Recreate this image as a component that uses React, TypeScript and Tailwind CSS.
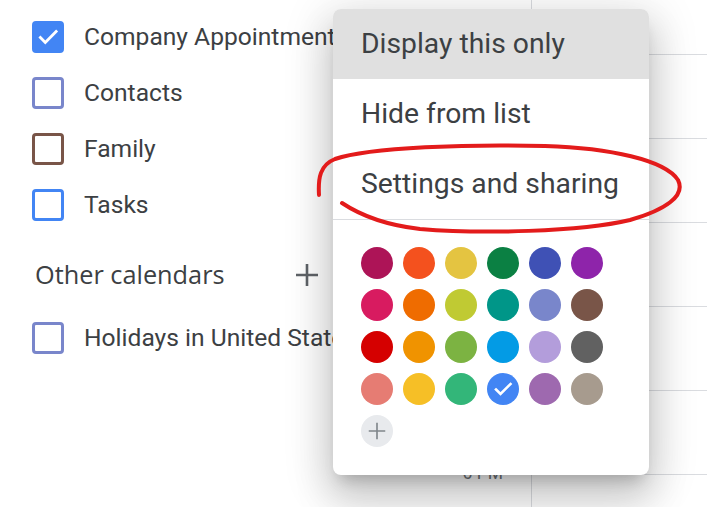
import React from "react";

const calendars = [
  { name: "Company Appointments", color: "#4285f4", checked: true },
  { name: "Contacts", color: "#7986cb", checked: false },
  { name: "Family", color: "#795548", checked: false },
  { name: "Tasks", color: "#4285f4", checked: false },
];

const swatches = [
  "#ad1457", "#f4511e", "#e4c441", "#0b8043", "#3f51b5", "#8e24aa",
  "#d81b60", "#ef6c00", "#c0ca33", "#009688", "#7986cb", "#795548",
  "#d50000", "#f09300", "#7cb342", "#039be5", "#b39ddb", "#616161",
  "#e67c73", "#f6bf26", "#33b679", "#4285f4", "#9e69af", "#a79b8e",
];

const Check = ({ size }: { size: number }) => (
  <svg width={size} height={size} viewBox="0 0 24 24" fill="none">
    <path
      d="M5 12.5l4.5 4.5L19.5 7"
      stroke="white"
      strokeWidth="2.6"
      strokeLinecap="square"
    />
  </svg>
);

const Plus = ({ size, stroke, color }: { size: number; stroke: number; color: string }) => (
  <svg width={size} height={size} viewBox="0 0 24 24" fill="none">
    <path d="M12 1v22M1 12h22" stroke={color} strokeWidth={stroke} />
  </svg>
);

const CalendarRow = ({
  name,
  color,
  checked,
}: {
  name: string;
  color: string;
  checked: boolean;
}) => (
  <div className="flex h-[56px] items-center gap-[20px] pl-[32px]">
    <div
      className="flex h-[32px] w-[32px] shrink-0 items-center justify-center rounded-[4px] border-[3px]"
      style={{ borderColor: color, backgroundColor: checked ? color : "white" }}
    >
      {checked && <Check size={28} />}
    </div>
    <span className="text-[24.6px] leading-none text-[#3c4043]">{name}</span>
  </div>
);

export default function App() {
  return (
    <div className="relative flex h-[507px] w-[707px] overflow-hidden bg-white font-['Roboto',sans-serif]">
      {/* sidebar */}
      <div className="w-[440px] shrink-0 overflow-hidden whitespace-nowrap pt-[9px]">
        {calendars.map((c) => (
          <CalendarRow key={c.name} {...c} />
        ))}
        <div className="mb-[7px] mt-[14px] flex h-[56px] w-[319px] items-center justify-between pl-[35px]">
          <span className="font-['Open_Sans',sans-serif] text-[25.3px] font-medium text-[#3c4043]">
            Other calendars
          </span>
          <Plus size={24} stroke={2.6} color="#5f6368" />
        </div>
        <CalendarRow name="Holidays in United States" color="#7986cb" checked={false} />
      </div>

      {/* time gutter */}
      <div className="flex w-[91px] shrink-0 flex-col items-end pr-[28px] pt-[463px]">
        <span className="text-[17.5px] leading-[20px] text-[#70757a]">6 PM</span>
      </div>

      {/* grid */}
      <div className="flex flex-1 flex-col border-l border-[#dadce0]">
        <div className="h-[55px] border-b border-[#dadce0]" />
        {[0, 1, 2, 3, 4].map((i) => (
          <div key={i} className="h-[84px] shrink-0 border-b border-[#dadce0]" />
        ))}
      </div>

      {/* menu */}
      <div className="absolute left-[333px] top-[9px] w-[316px] overflow-hidden rounded-[8px] bg-white shadow-[0_24px_38px_3px_rgba(0,0,0,0.14),0_9px_46px_8px_rgba(0,0,0,0.12),0_11px_15px_-7px_rgba(0,0,0,0.2)]">
        <div className="flex h-[70px] items-center bg-[#e0e0e0] px-[28px] text-[28.3px] text-[#3c4043]">
          Display this only
        </div>
        <div className="flex h-[70px] items-center px-[28px] text-[28.3px] text-[#3c4043]">
          Hide from list
        </div>
        <div className="flex h-[70px] items-center px-[28px] text-[28.3px] text-[#3c4043]">
          Settings and sharing
        </div>
        <div className="h-px bg-[#dadce0]" />
        <div className="grid grid-cols-[repeat(6,32px)] gap-[10px] px-[28px] pb-[28px] pt-[27px]">
          {swatches.map((c, i) => (
            <div
              key={i}
              className="flex h-[32px] w-[32px] items-center justify-center rounded-full"
              style={{ backgroundColor: c }}
            >
              {i === 21 && <Check size={24} />}
            </div>
          ))}
          <div className="flex h-[32px] w-[32px] items-center justify-center rounded-full bg-[#e8eaed]">
            <Plus size={18} stroke={2.2} color="#80868b" />
          </div>
        </div>
      </div>

      {/* hand-drawn annotation */}
      <svg
        className="pointer-events-none absolute left-0 top-0"
        width="707"
        height="507"
        viewBox="0 0 707 507"
        fill="none"
      >
        <path
          d="M319 195 C318 178 320 165 335 159 C370 147 470 144 545 146 C610 148 665 160 678 180 C686 196 665 210 630 220 C580 232 480 234 420 229 C385 225 360 215 342 203"
          stroke="#e31b1b"
          strokeWidth="4"
          strokeLinecap="round"
        />
      </svg>
    </div>
  );
}
